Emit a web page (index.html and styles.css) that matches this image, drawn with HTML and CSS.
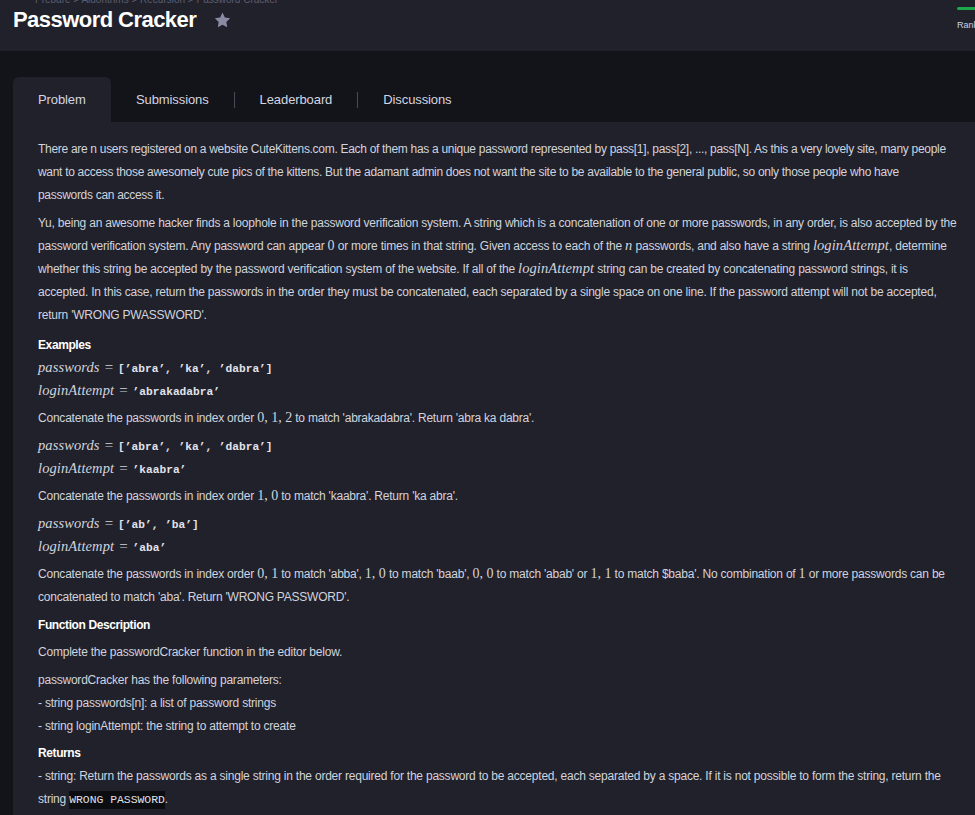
FILE: index.html
```html
<!DOCTYPE html>
<html>
<head>
<meta charset="utf-8">
<link rel="stylesheet" href="styles.css">
</head>
<body>
<header class="topbar">
  <div class="crumbs">Prepare &gt; Algorithms &gt; Recursion &gt; Password Cracker</div>
  <div class="title-row">
    <h1 class="title">Password Cracker</h1>
    <svg class="star" width="17" height="16" viewBox="0 0 24 23"><path d="M12 0.8l3.4 7 7.6 1.1-5.5 5.4 1.3 7.6L12 18.3l-6.8 3.6 1.3-7.6L1 8.9l7.6-1.1z" fill="#8a8ba3"/></svg>
  </div>
  <div class="rank">
    <div class="rank-bar"></div>
    <div class="rank-label">Rank</div>
  </div>
</header>
<main class="main">
  <nav class="tabs">
    <div class="tab active">Problem</div>
    <div class="tab">Submissions</div>
    <div class="sep"></div>
    <div class="tab">Leaderboard</div>
    <div class="sep"></div>
    <div class="tab">Discussions</div>
  </nav>
  <section class="panel">
    <p class="intro">There are n users registered on a website CuteKittens.com. Each of them has a unique password represented by pass[1], pass[2], ..., pass[N]. As this a very lovely site, many people want to access those awesomely cute pics of the kittens. But the adamant admin does not want the site to be available to the general public, so only those people who have passwords can access it.</p>
    <p>Yu, being an awesome hacker finds a loophole in the password verification system. A string which is a concatenation of one or more passwords, in any order, is also accepted by the password verification system. Any password can appear <span class="num">0</span> or more times in that string. Given access to each of the <span class="mi">n</span> passwords, and also have a string <span class="mi la">loginAttempt</span>, determine whether this string be accepted by the password verification system of the website. If all of the <span class="mi la">loginAttempt</span> string can be created by concatenating password strings, it is accepted. In this case, return the passwords in the order they must be concatenated, each separated by a single space on one line. If the password attempt will not be accepted, return 'WRONG PWASSWORD'.</p>
    <p class="head head-first">Examples</p>
    <p class="math"><span class="mi">passwords</span> <span class="op">=</span> <span class="tt">[’abra’, ’ka’, ’dabra’]</span></p>
    <p class="math"><span class="mi la">loginAttempt</span> <span class="op">=</span> <span class="tt">’abrakadabra’</span></p>
    <p>Concatenate the passwords in index order <span class="num">0, 1, 2</span> to match 'abrakadabra'. Return 'abra ka dabra'.</p>
    <p class="math"><span class="mi">passwords</span> <span class="op">=</span> <span class="tt">[’abra’, ’ka’, ’dabra’]</span></p>
    <p class="math"><span class="mi la">loginAttempt</span> <span class="op">=</span> <span class="tt">’kaabra’</span></p>
    <p>Concatenate the passwords in index order <span class="num">1, 0</span> to match 'kaabra'. Return 'ka abra'.</p>
    <p class="math"><span class="mi">passwords</span> <span class="op">=</span> <span class="tt">[’ab’, ’ba’]</span></p>
    <p class="math"><span class="mi la">loginAttempt</span> <span class="op">=</span> <span class="tt">’aba’</span></p>
    <p>Concatenate the passwords in index order <span class="num">0, 1</span> to match 'abba', <span class="num">1, 0</span> to match 'baab', <span class="num">0, 0</span> to match 'abab' or <span class="num">1, 1</span> to match $baba'. No combination of <span class="num">1</span> or more passwords can be concatenated to match 'aba'. Return 'WRONG PASSWORD'.</p>
    <p class="head">Function Description</p>
    <p>Complete the passwordCracker function in the editor below.</p>
    <p>passwordCracker has the following parameters:<br>- string passwords[n]: a list of password strings<br>- string loginAttempt: the string to attempt to create</p>
    <p class="head head-tight">Returns</p>
    <p>- string: Return the passwords as a single string in the order required for the password to be accepted, each separated by a space. If it is not possible to form the string, return the string <code>WRONG PASSWORD</code>.</p>
  </section>
</main>
</body>
</html>
```
FILE: styles.css
```css
* { box-sizing: border-box; }
html, body { margin: 0; padding: 0; }
body {
  background: #131419;
  color: #d2d3dd;
  font-family: "Liberation Sans", Arial, sans-serif;
  overflow: hidden;
  height: 815px;
}
.topbar {
  background: #20212b;
  height: 51px;
  position: relative;
  padding: 0 13px;
  overflow: hidden;
}
.crumbs {
  height: 3px;
  font-size: 10px;
  line-height: 0px;
  color: #5d5e70;
  overflow: hidden;
  padding-left: 22px;
}
.title-row {
  display: flex;
  align-items: center;
  gap: 18px;
  height: 33px;
}
.title {
  margin: 0;
  font-size: 22px;
  font-weight: bold;
  color: #ffffff;
  letter-spacing: -0.55px;
}
.star { margin-top: 1px; }
.rank {
  position: absolute;
  left: 957px;
  top: 7px;
}
.rank-bar {
  width: 30px;
  height: 3px;
  border-radius: 2px;
  background: #1ba94c;
}
.rank-label {
  margin-top: 10px;
  font-size: 9px;
  color: #c6d4ee;
}
.main {
  padding: 26px 0 0 13px;
}
.tabs {
  display: flex;
  align-items: center;
  height: 45px;
}
.tab {
  font-size: 13px;
  color: #d4d5e0;
  padding: 0 25px;
  height: 45px;
  display: flex;
  align-items: center;
  letter-spacing: -0.1px;
}
.tab.active {
  background: #20212b;
  border-radius: 6px 6px 0 0;
  width: 98px;
}
.sep {
  width: 1px;
  height: 16px;
  background: #4a4b58;
}
.panel {
  background: #20212b;
  padding: 16px 16px 0 25px;
  font-size: 12px;
  line-height: 23px;
  letter-spacing: -0.22px;
  min-height: 700px;
}
.panel p { margin: 0 0 4.5px 0; }
.panel p.intro { letter-spacing: -0.3px; max-width: 914px; }
.panel p.head {
  font-weight: bold;
  color: #ffffff;
  margin-bottom: 4.5px;
  letter-spacing: -0.4px;
}
.panel p.head-first { margin-top: 7px; margin-bottom: 0; }
.panel p.head-tight { margin-bottom: 0; }
.panel p.math { margin-bottom: 0; }
.panel p.math + p:not(.math) { margin-top: 4.5px; }
.mi {
  font-family: "Liberation Serif", serif;
  font-style: italic;
  font-size: 14.5px;
  line-height: 1;
  letter-spacing: 0.1px;
}
.mi.la { letter-spacing: 0.1px; }
.num {
  font-family: "Liberation Serif", serif;
  font-size: 14px;
  line-height: 1;
  letter-spacing: 0;
}
.op {
  font-family: "Liberation Serif", serif;
  font-size: 15px;
  line-height: 1;
  padding: 0 2px;
}
.tt {
  font-family: "Liberation Mono", monospace;
  font-weight: bold;
  font-size: 11.2px;
  line-height: 1;
  letter-spacing: 0;
  color: #e2e3ec;
}
code {
  font-family: "Liberation Mono", monospace;
  font-size: 11.4px;
  line-height: 1;
  background: #0c0d11;
  padding: 3px 0;
  letter-spacing: 0;
  color: #e0e1ea;
}
```
